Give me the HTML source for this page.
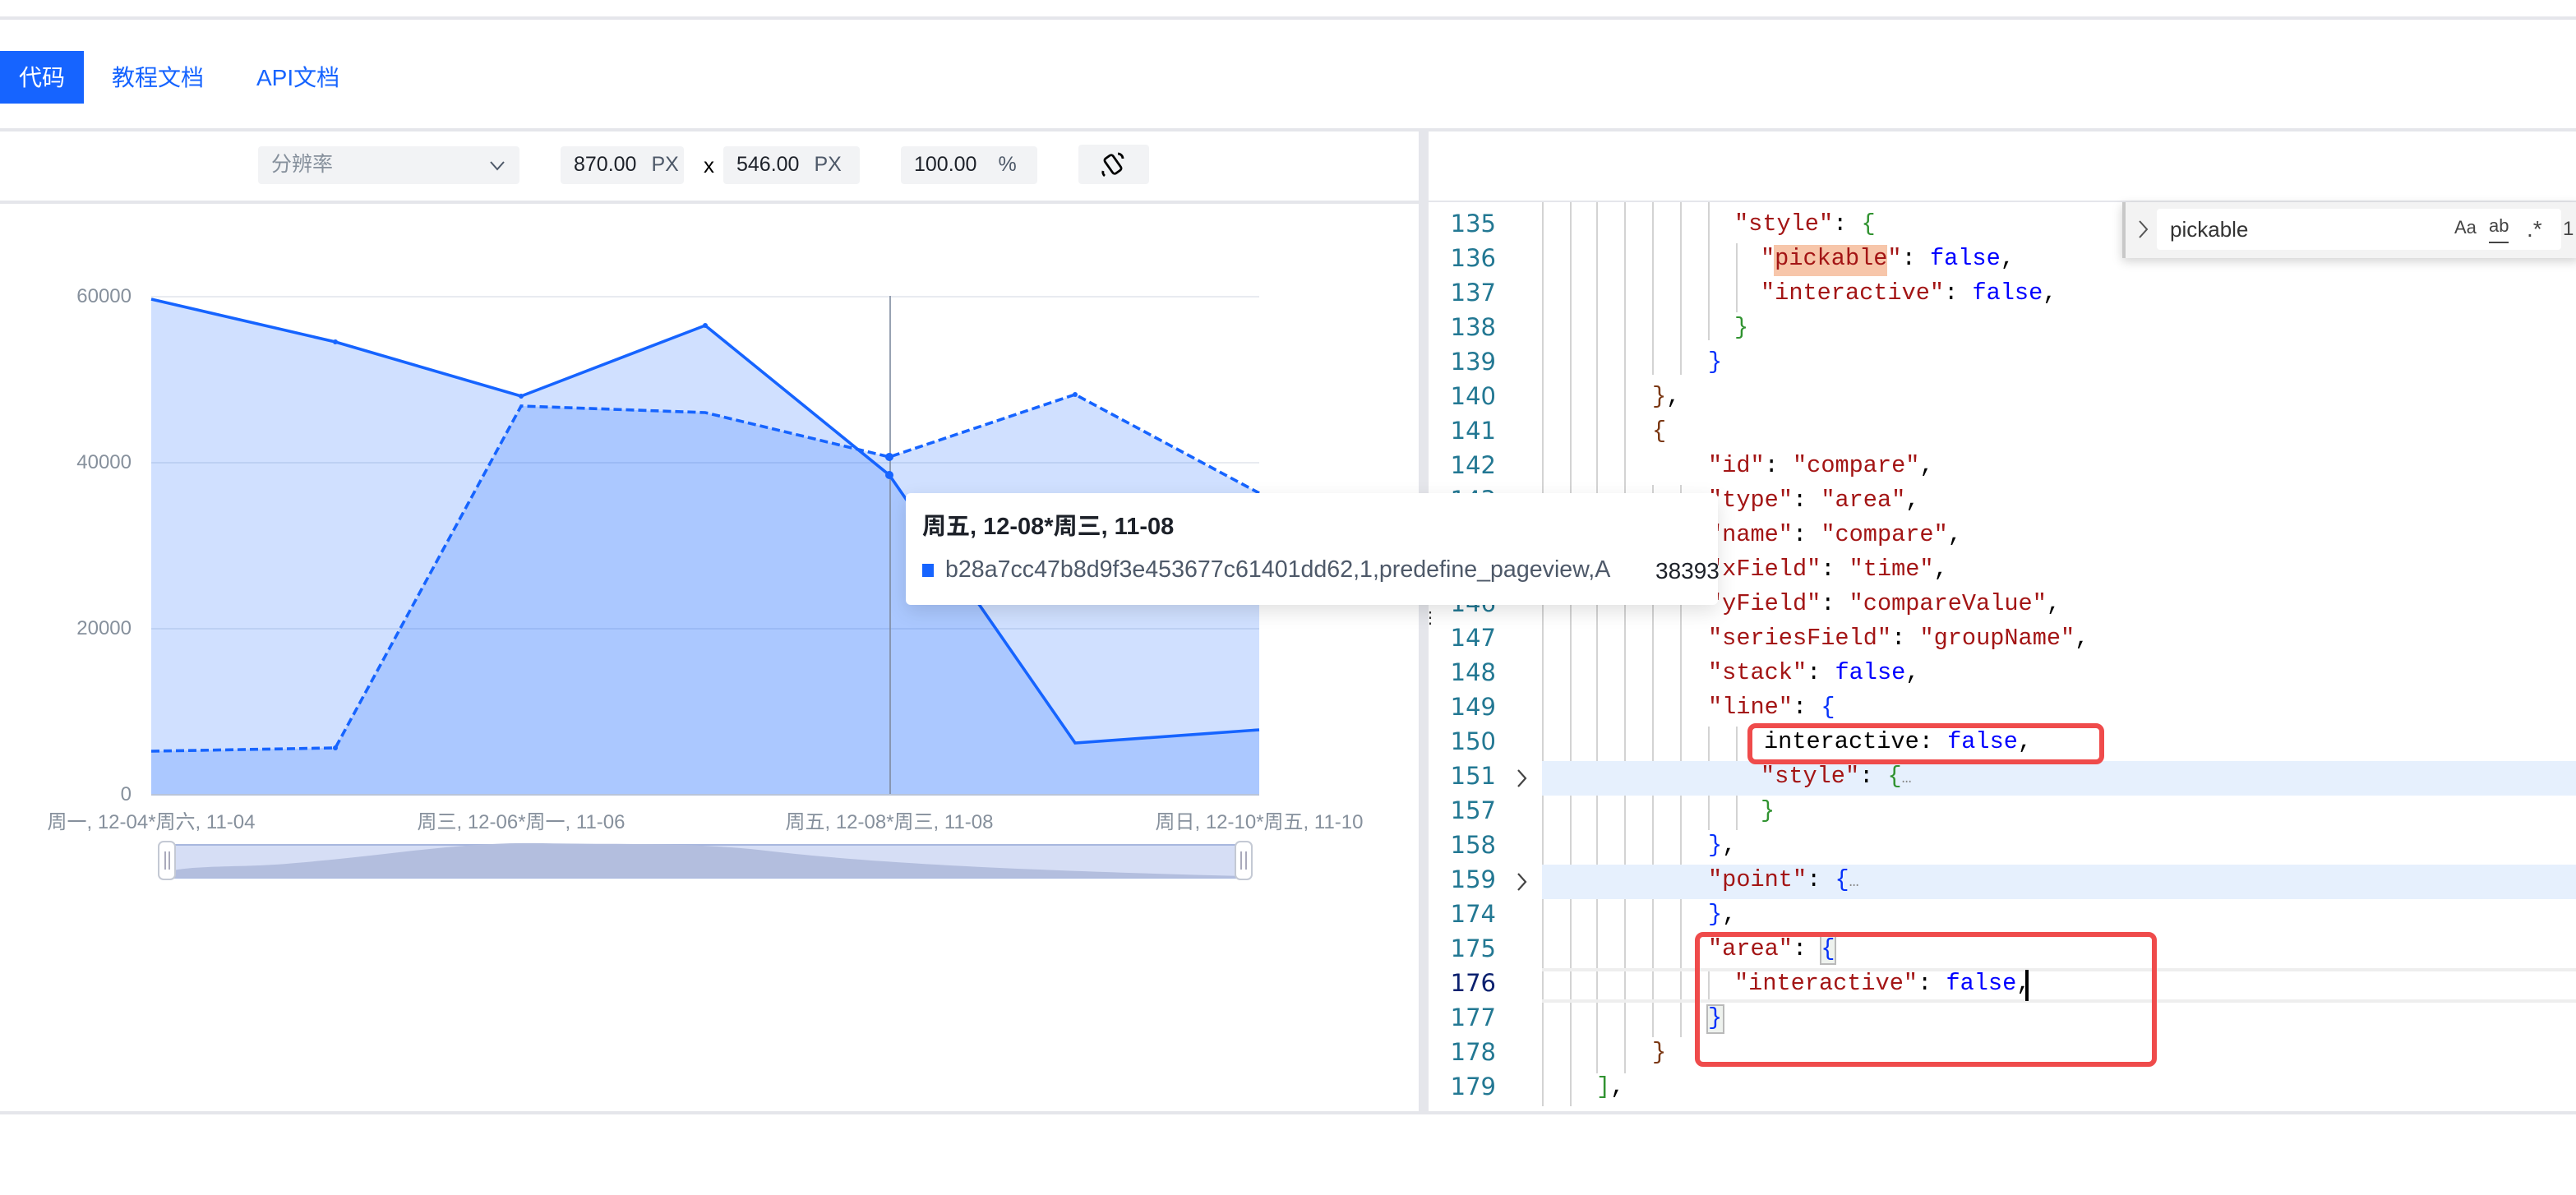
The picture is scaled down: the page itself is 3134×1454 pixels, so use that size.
<!DOCTYPE html>
<html><head><meta charset="utf-8"><style>
html,body{margin:0;padding:0;background:#fff;width:3134px;height:1454px;overflow:hidden}
#w{position:absolute;left:0;top:0;width:1567px;height:727px;transform:scale(2);transform-origin:0 0;font-family:"Liberation Sans","Noto Sans CJK SC",sans-serif}
.a{position:absolute}
.ln{position:absolute;left:870px;width:40px;text-align:right;color:#237893;font-size:14.5px;font-family:"DejaVu Sans","Liberation Sans",sans-serif;line-height:21px;height:21px}
.cd{position:absolute;font-family:"Liberation Mono",monospace;font-size:14.3px;line-height:21px;height:21px;white-space:pre;color:#000}
.k{color:#a31515}.f{color:#0000ff}.b1{color:#0431fa}.b2{color:#319331}.b3{color:#7b3814}
.g{position:absolute;width:1px;background:#d3d3d3}
.btn{position:absolute;background:#f2f3f5;border-radius:2px;font-size:12.5px;color:#1d2129;line-height:23px}
</style></head><body><div id="w">
<div class="a" style="left:0;top:10px;width:1567px;height:2px;background:#e5e6eb"></div>
<div class="a" style="left:0;top:31px;width:51px;height:32px;background:#1664ff;color:#fff;font-size:14px;line-height:32px;text-align:center">代码</div>
<div class="a" style="left:68px;top:31px;font-size:14px;line-height:32px;color:#1664ff">教程文档</div>
<div class="a" style="left:156px;top:31px;font-size:14px;line-height:32px;color:#1664ff">API文档</div>
<div class="a" style="left:0;top:78px;width:1567px;height:2px;background:#e5e6eb"></div>
<div class="a" style="left:0;top:122px;width:864px;height:2px;background:#e5e6eb"></div>
<div class="a" style="left:869px;top:122px;width:698px;height:1px;background:#e5e6eb"></div>
<div class="a" style="left:863px;top:80px;width:6px;height:598px;background:#e5e6eb"></div>
<div class="a" style="left:0;top:676px;width:1567px;height:2px;background:#e5e6eb"></div>
<!-- toolbar -->
<div class="btn" style="left:157px;top:89px;width:159px;height:23px;color:#86909c"><span style="margin-left:8px">分辨率</span><svg class="a" style="left:141px;top:9px" width="9" height="6"><path d="M0.5 0.5L4.5 5L8.5 0.5" fill="none" stroke="#4e5969" stroke-width="1"/></svg></div>
<div class="btn" style="left:341px;top:89px;width:75px;height:23px"><span style="margin-left:8px">870.00</span><span style="margin-left:9px;color:#4e5969">PX</span></div>
<div class="a" style="left:428px;top:89px;font-size:13px;line-height:23px">x</div>
<div class="btn" style="left:440px;top:89px;width:83px;height:23px"><span style="margin-left:8px">546.00</span><span style="margin-left:9px;color:#4e5969">PX</span></div>
<div class="btn" style="left:548px;top:89px;width:83px;height:23px"><span style="margin-left:8px">100.00</span><span style="margin-left:13px;color:#4e5969">%</span></div>
<div class="btn" style="left:656px;top:88px;width:43px;height:24px"><svg class="a" style="left:12px;top:3px" width="19" height="19" viewBox="0 0 19 19"><rect x="6" y="3.5" width="6" height="11" rx="1.5" transform="rotate(-35 9 9)" fill="none" stroke="#000" stroke-width="1.4"/><path d="M12 2.5a3 3 0 0 1 3 3" fill="none" stroke="#000" stroke-width="1.4"/><path d="M4 16a3 3 0 0 1-1-3" fill="none" stroke="#000" stroke-width="1.4"/></svg></div>
<!-- chart -->
<svg class="a" style="left:0;top:124px" width="862" height="552" viewBox="0 124 862 552">
<g stroke="#e8ebf0" stroke-width="1"><line x1="92" y1="180.5" x2="766" y2="180.5"/><line x1="92" y1="281.5" x2="766" y2="281.5"/><line x1="92" y1="382.5" x2="766" y2="382.5"/></g>
<polygon points="92,182 204,208 317,241 429,198 541,289 654,452 766,444 766,483 92,483" fill="#1664ff" fill-opacity="0.2"/>
<polygon points="92,457 204,455 317,247 429,251 541,278 654,240 766,300 766,483 92,483" fill="#1664ff" fill-opacity="0.2"/>
<line x1="92" y1="483.5" x2="766" y2="483.5" stroke="#b8c4d9"/>
<line x1="541.5" y1="180" x2="541.5" y2="483" stroke="#7f8aa0" stroke-width="0.8"/>
<polyline points="92,182 204,208 317,241 429,198 541,289 654,452 766,444" fill="none" stroke="#1664ff" stroke-width="1.8"/>
<polyline points="92,457 204,455 317,247 429,251 541,278 654,240 766,300" fill="none" stroke="#1664ff" stroke-width="1.8" stroke-dasharray="5 2.5"/>
<g fill="#1664ff"><circle cx="204" cy="208" r="1.5"/><circle cx="317" cy="241" r="1.5"/><circle cx="429" cy="198" r="1.5"/><circle cx="541" cy="289" r="2.5"/><circle cx="541" cy="278" r="2.5"/><circle cx="654" cy="240" r="1.5"/><circle cx="204" cy="455" r="1.5"/></g>
<g font-size="12" fill="#86909c" font-family="Liberation Sans,Noto Sans CJK SC,sans-serif" text-anchor="end"><text x="80" y="184">60000</text><text x="80" y="285">40000</text><text x="80" y="386">20000</text><text x="80" y="487">0</text></g>
<g font-size="12" fill="#86909c" font-family="Liberation Sans,Noto Sans CJK SC,sans-serif" text-anchor="middle"><text x="92" y="504">周一, 12-04*周六, 11-04</text><text x="317" y="504">周三, 12-06*周一, 11-06</text><text x="541" y="504">周五, 12-08*周三, 11-08</text><text x="766" y="504">周日, 12-10*周五, 11-10</text></g>
<rect x="101" y="514" width="656" height="20" fill="#d6def5" stroke="#a8b7de" stroke-width="1"/>
<path d="M103,530 C120,526 150,528 180,525 C240,520 280,512 330,513 C380,514 420,512 470,518 C540,526 640,530 757,533 L757,534 L103,534Z" fill="#b3bede"/>
<rect x="96.5" y="512" width="10" height="23" rx="3" fill="#fff" stroke="#c4c9d4"/><rect x="751.5" y="512" width="10" height="23" rx="3" fill="#fff" stroke="#c4c9d4"/>
<g stroke="#aab"><line x1="100.5" y1="518" x2="100.5" y2="529"/><line x1="103" y1="518" x2="103" y2="529"/><line x1="755" y1="518" x2="755" y2="529"/><line x1="758" y1="518" x2="758" y2="529"/></g>
</svg>
<!-- editor guides -->
<div class="g" style="left:938px;top:123px;height:550px"></div>
<div class="g" style="left:955px;top:123px;height:550px"></div>
<div class="g" style="left:971px;top:123px;height:530px"></div>
<div class="g" style="left:988px;top:123px;height:530px"></div>
<div class="g" style="left:1005px;top:123px;height:105px"></div>
<div class="g" style="left:1022px;top:123px;height:105px"></div>
<div class="g" style="left:1039px;top:123px;height:84px"></div>
<div class="g" style="left:1056px;top:148px;height:42px"></div>
<div class="g" style="left:1005px;top:295px;height:336px"></div>
<div class="g" style="left:1022px;top:295px;height:336px"></div>
<div class="g" style="left:1039px;top:442px;height:63px"></div>
<div class="g" style="left:1056px;top:442px;height:63px"></div>
<div class="g" style="left:1039px;top:589px;height:21px"></div>
<!-- highlighted rows -->
<div class="a" style="left:938px;top:463px;width:629px;height:21px;background:#e6f0fd"></div>
<div class="a" style="left:938px;top:526px;width:629px;height:21px;background:#e6f0fd"></div>
<div class="a" style="left:938px;top:589px;width:629px;border-top:2px solid #eee;border-bottom:2px solid #eee;box-sizing:border-box;height:21px"></div>
<div class="a" style="left:1079px;top:149px;width:69px;height:19px;background:#f7c6aa"></div>
<!-- line numbers -->
<div class="ln" style="top:127px">135</div><div class="ln" style="top:148px">136</div><div class="ln" style="top:169px">137</div><div class="ln" style="top:190px">138</div><div class="ln" style="top:211px">139</div><div class="ln" style="top:232px">140</div><div class="ln" style="top:253px">141</div><div class="ln" style="top:274px">142</div><div class="ln" style="top:295px">143</div><div class="ln" style="top:316px">144</div><div class="ln" style="top:337px">145</div><div class="ln" style="top:358px">146</div><div class="ln" style="top:379px">147</div><div class="ln" style="top:400px">148</div><div class="ln" style="top:421px">149</div><div class="ln" style="top:442px">150</div><div class="ln" style="top:463px">151</div><div class="ln" style="top:484px">157</div><div class="ln" style="top:505px">158</div><div class="ln" style="top:526px">159</div><div class="ln" style="top:547px">174</div><div class="ln" style="top:568px">175</div><div class="ln" style="top:589px;color:#0b216f">176</div><div class="ln" style="top:610px">177</div><div class="ln" style="top:631px">178</div><div class="ln" style="top:652px">179</div>
<svg class="a" style="left:922px;top:467px" width="8" height="13"><path d="M1.5 1.5L6 6.5L1.5 11.5" fill="none" stroke="#444" stroke-width="1.1"/></svg>
<svg class="a" style="left:922px;top:530px" width="8" height="13"><path d="M1.5 1.5L6 6.5L1.5 11.5" fill="none" stroke="#444" stroke-width="1.1"/></svg>
<!-- code -->
<div class="cd" style="left:1055px;top:127px"><span class="k">"style"</span>: <span class="b2">{</span></div>
<div class="cd" style="left:1071px;top:148px"><span class="k">"pickable"</span>: <span class="f">false</span>,</div>
<div class="cd" style="left:1071px;top:169px"><span class="k">"interactive"</span>: <span class="f">false</span>,</div>
<div class="cd" style="left:1055px;top:190px"><span class="b2">}</span></div>
<div class="cd" style="left:1039px;top:211px"><span class="b1">}</span></div>
<div class="cd" style="left:1005px;top:232px"><span class="b3">}</span>,</div>
<div class="cd" style="left:1005px;top:253px"><span class="b3">{</span></div>
<div class="cd" style="left:1039px;top:274px"><span class="k">"id"</span>: <span class="k">"compare"</span>,</div>
<div class="cd" style="left:1039px;top:295px"><span class="k">"type"</span>: <span class="k">"area"</span>,</div>
<div class="cd" style="left:1039px;top:316px"><span class="k">"name"</span>: <span class="k">"compare"</span>,</div>
<div class="cd" style="left:1039px;top:337px"><span class="k">"xField"</span>: <span class="k">"time"</span>,</div>
<div class="cd" style="left:1039px;top:358px"><span class="k">"yField"</span>: <span class="k">"compareValue"</span>,</div>
<div class="cd" style="left:1039px;top:379px"><span class="k">"seriesField"</span>: <span class="k">"groupName"</span>,</div>
<div class="cd" style="left:1039px;top:400px"><span class="k">"stack"</span>: <span class="f">false</span>,</div>
<div class="cd" style="left:1039px;top:421px"><span class="k">"line"</span>: <span class="b1">{</span></div>
<div class="cd" style="left:1073px;top:442px">interactive: <span class="f">false</span>,</div>
<div class="cd" style="left:1071px;top:463px"><span class="k">"style"</span>: <span class="b2">{</span><span style="color:#888;font-size:10px">…</span></div>
<div class="cd" style="left:1071px;top:484px"><span class="b2">}</span></div>
<div class="cd" style="left:1039px;top:505px"><span class="b1">}</span>,</div>
<div class="cd" style="left:1039px;top:526px"><span class="k">"point"</span>: <span class="b1">{</span><span style="color:#888;font-size:10px">…</span></div>
<div class="cd" style="left:1039px;top:547px"><span class="b1">}</span>,</div>
<div class="cd" style="left:1039px;top:568px"><span class="k">"area"</span>: <span class="b1" style="outline:1px solid #b9b9b9;background:#eef2ee">{</span></div>
<div class="cd" style="left:1055px;top:589px"><span class="k">"interactive"</span>: <span class="f">false</span>,</div>
<div class="a" style="left:1232px;top:590px;width:2px;height:19px;background:#000"></div>
<div class="cd" style="left:1039px;top:610px"><span class="b1" style="outline:1px solid #b9b9b9;background:#eef2ee">}</span></div>
<div class="cd" style="left:1005px;top:631px"><span class="b3">}</span></div>
<div class="cd" style="left:971px;top:652px"><span class="b2">]</span>,</div>
<!-- red boxes -->
<div class="a" style="left:1063px;top:440px;width:217px;height:25px;border:3px solid #ef4b4b;border-radius:5px;box-sizing:border-box"></div>
<div class="a" style="left:1031px;top:567px;width:281px;height:82px;border:3px solid #ef4b4b;border-radius:5px;box-sizing:border-box"></div>
<!-- find widget -->
<div class="a" style="left:1291px;top:123px;width:276px;height:34px;background:#f3f3f3;box-shadow:0 2px 6px rgba(0,0,0,0.18);border-left:2px solid #c8c8c8"></div>
<svg class="a" style="left:1300px;top:133px" width="8" height="13"><path d="M1.5 1.5L6 6.5L1.5 11.5" fill="none" stroke="#555" stroke-width="1"/></svg>
<div class="a" style="left:1312px;top:127px;width:246px;height:25px;background:#fff;border-radius:2px"></div>
<div class="a" style="left:1320px;top:127px;font-size:13px;line-height:25px;color:#333">pickable</div>
<div class="a" style="left:1493px;top:127px;font-size:11px;line-height:25px;color:#444">Aa</div>
<div class="a" style="left:1514px;top:127px;font-size:11px;line-height:23px;color:#444;border-bottom:1px solid #444;height:20px">ab</div>
<div class="a" style="left:1537px;top:127px;font-size:14px;line-height:25px;color:#444">.*</div>
<div class="a" style="left:1559px;top:127px;font-size:12px;line-height:25px;color:#444">1</div>
<div class="a" style="left:865px;top:372px;font-size:10px;color:#333;line-height:10px">⋮</div>
<!-- tooltip -->
<div class="a" style="left:551px;top:300px;width:494px;height:68px;background:#fff;border-radius:3px;box-shadow:0 4px 12px rgba(0,0,0,0.12)"></div>
<div class="a" style="left:561px;top:310px;font-size:14.5px;font-weight:bold;color:#1d2129;line-height:22px">周五, 12-08*周三, 11-08</div>
<div class="a" style="left:561px;top:343px;width:7px;height:8px;background:#1664ff"></div>
<div class="a" style="left:575px;top:336px;font-size:14.3px;color:#4e5969;line-height:22px">b28a7cc47b8d9f3e453677c61401dd62,1,predefine_pageview,A</div>
<div class="a" style="left:1007px;top:336px;font-size:14px;color:#1d2129;line-height:22px">38393</div>
</div></body></html>
